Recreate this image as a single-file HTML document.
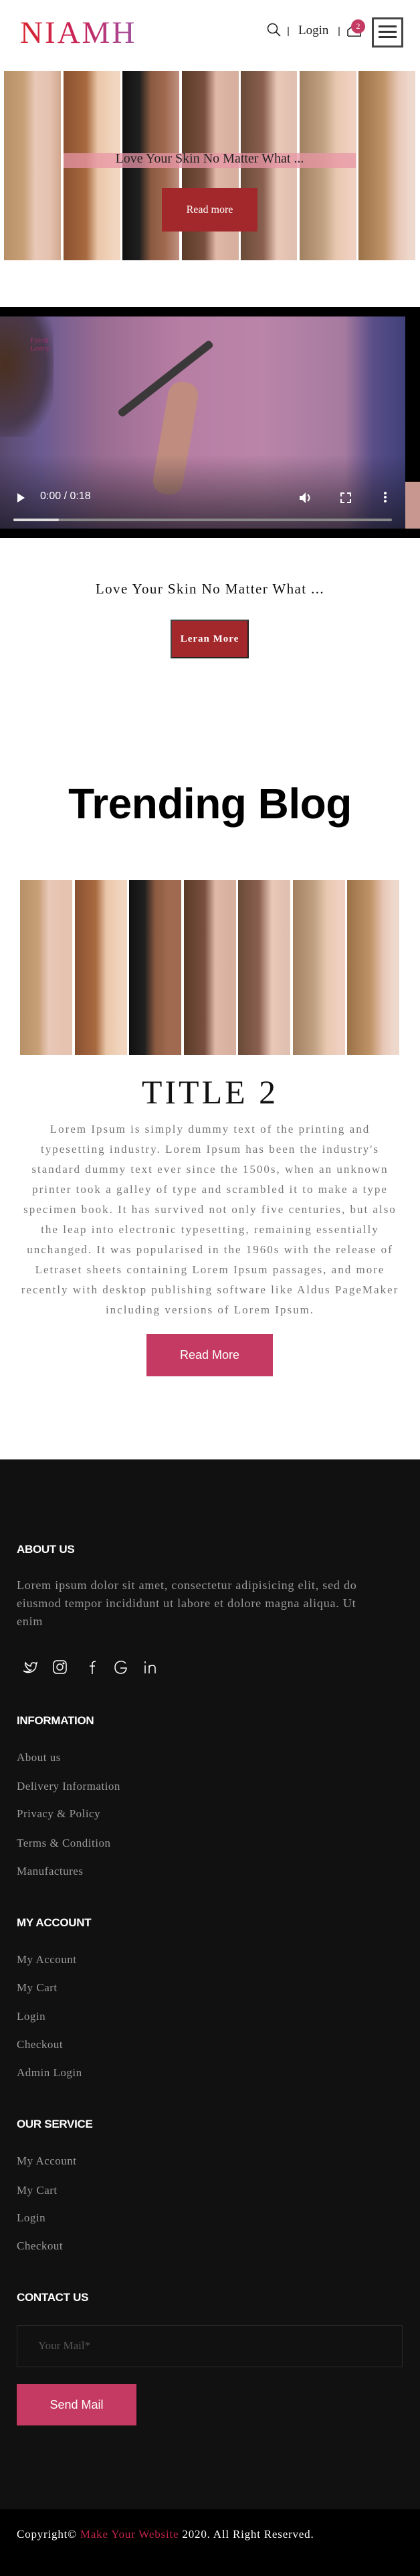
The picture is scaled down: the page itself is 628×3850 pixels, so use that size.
<!DOCTYPE html>
<html><head><meta charset="utf-8">
<style>
*{margin:0;padding:0;box-sizing:border-box}
html,body{width:628px;height:3850px;background:#fff;overflow:hidden}
body{position:relative;font-family:"Liberation Serif",serif}
.a{position:absolute}
.strips{display:flex;justify-content:space-between}
.strips div{height:100%}
.fh{position:absolute;left:25px;color:#fff;font-family:"Liberation Sans",sans-serif;font-weight:bold;font-size:17px;letter-spacing:-0.3px;line-height:20px}
.fl{position:absolute;left:25px;color:#9a9a9a;font-size:17px;line-height:20px;letter-spacing:0.5px}
</style></head><body>

<!-- header -->
<div class="a" style="left:30px;top:24px;font-size:47px;line-height:50px;letter-spacing:3px;background:linear-gradient(90deg,#d8262f,#c8245a 50%,#a050a0);-webkit-background-clip:text;background-clip:text;color:transparent">NIAMH</div>
<svg class="a" style="left:399px;top:34px" width="22" height="22" viewBox="0 0 22 22"><circle cx="8.5" cy="8.5" r="7" fill="none" stroke="#222" stroke-width="1.6"/><line x1="13.5" y1="13.5" x2="20" y2="20" stroke="#222" stroke-width="1.8"/></svg>
<div class="a" style="left:430px;top:40px;width:2px;height:14px;background:#777"></div>
<div class="a" style="left:446px;top:35px;font-size:19px;color:#222">Login</div>
<div class="a" style="left:506px;top:40px;width:2px;height:14px;background:#777"></div>
<svg class="a" style="left:518px;top:38px" width="24" height="18" viewBox="0 0 24 18"><path d="M2 16 L2 7 L8 2 M2 16 L21 16 L21 9" fill="none" stroke="#222" stroke-width="1.6"/></svg>
<div class="a" style="left:525px;top:29px;width:21px;height:21px;border-radius:50%;background:#c43a62;color:#fff;font-size:12px;text-align:center;line-height:21px">2</div>
<div class="a" style="left:556px;top:26px;width:47px;height:45px;border:3px solid #444"></div>
<div class="a" style="left:566px;top:38px;width:27px;height:3px;background:#333"></div>
<div class="a" style="left:566px;top:46px;width:27px;height:3px;background:#333"></div>
<div class="a" style="left:566px;top:54px;width:27px;height:3px;background:#333"></div>

<!-- hero -->
<div class="a strips" style="left:6px;top:106px;width:615px;height:283px">
<div style="width:85px;background:linear-gradient(90deg,#b89068 0,#c8a078 35%,#e8c8b8 55%,#e6c2b0 80%,#d0a890)"></div>
<div style="width:85px;background:linear-gradient(90deg,#8a5030 0,#a86a40 40%,#eac6a8 60%,#f2d6c0 90%)"></div>
<div style="width:85px;background:linear-gradient(90deg,#101010 0,#202020 30%,#8a5a40 50%,#a06a50 75%,#c09080)"></div>
<div style="width:85px;background:linear-gradient(90deg,#5a3a28 0,#7a5040 40%,#e0b8a8 60%,#d8b0a0 90%)"></div>
<div style="width:84px;background:linear-gradient(90deg,#6a4a38 0,#8a6050 40%,#eac8b8 65%,#e0c0b0 90%)"></div>
<div style="width:85px;background:linear-gradient(90deg,#a08060 0,#c0a080 40%,#e8c8b0 65%,#f0d0c0 90%)"></div>
<div style="width:85px;background:linear-gradient(90deg,#9a7048 0,#c09468 45%,#e8c8b8 70%,#eed8cc 90%)"></div>
</div>
<div class="a" style="left:95px;top:229px;width:437px;height:22px;background:rgba(232,150,165,.75)"></div>
<div class="a" style="left:95px;top:226px;width:437px;text-align:center;font-size:20px;color:#222">Love Your Skin No Matter What ...</div>
<div class="a" style="left:242px;top:281px;width:143px;height:65px;background:#a3282b;color:#fff;font-size:16px;text-align:center;line-height:65px">Read more</div>

<!-- video -->
<div class="a" style="left:0;top:459px;width:628px;height:345px;background:#000"></div>
<div class="a" style="left:0;top:473px;width:606px;height:317px;background:linear-gradient(90deg,#5a4a70 0,#6a5a90 10%,#9a6c92 25%,#b87ea4 45%,#b985a8 65%,#a67aa0 85%,#5a4e88 92%,#40407a 100%)"></div>
<div class="a" style="left:606px;top:720px;width:22px;height:70px;background:#c89890"></div>
<div class="a" style="left:0;top:473px;width:80px;height:180px;background:radial-gradient(ellipse at 10% 40%,#4a3020 0,#4a3a50 60%,transparent 80%)"></div>
<div class="a" style="left:160px;top:560px;width:175px;height:12px;background:#3a3838;transform:rotate(-38deg);border-radius:5px"></div>
<div class="a" style="left:240px;top:570px;width:45px;height:170px;background:#c08c80;border-radius:20px;transform:rotate(10deg)"></div>
<div class="a" style="left:0;top:680px;width:606px;height:110px;background:linear-gradient(180deg,transparent,rgba(20,20,30,.7))"></div>
<div class="a" style="left:45px;top:503px;font-size:11px;color:#a03070;font-style:italic">Fair&amp;<br>Lovely</div>
<svg class="a" style="left:24px;top:736px" width="14" height="16"><path d="M2 1 L13 8 L2 15 Z" fill="#fff"/></svg>
<div class="a" style="left:60px;top:733px;color:#fff;font-family:'Liberation Sans',sans-serif;font-size:16px">0:00 / 0:18</div>
<svg class="a" style="left:446px;top:734px" width="22" height="20"><path d="M2 7 H6 L11 2 V18 L6 13 H2 Z" fill="#fff"/><path d="M14 5 Q19 10 14 15" fill="none" stroke="#fff" stroke-width="2"/></svg>
<svg class="a" style="left:508px;top:735px" width="18" height="18"><path d="M2 7 V2 H7 M11 2 H16 V7 M16 11 V16 H11 M7 16 H2 V11" fill="none" stroke="#fff" stroke-width="2"/></svg>
<div class="a" style="left:574px;top:735px;width:4px;height:4px;background:#fff;border-radius:50%;box-shadow:0 6px #fff,0 12px #fff"></div>
<div class="a" style="left:20px;top:775px;width:566px;height:4px;background:#888;border-radius:2px"></div>
<div class="a" style="left:20px;top:775px;width:68px;height:4px;background:#ddd;border-radius:2px"></div>

<div class="a" style="left:0;top:868px;width:628px;text-align:center;font-size:21px;letter-spacing:1.4px;color:#111">Love Your Skin No Matter What ...</div>
<div class="a" style="left:255px;top:926px;width:117px;height:58px;background:#a3282b;border:2px solid #444;border-right-color:#222;border-bottom-color:#222;color:#fff;font-size:15px;letter-spacing:1px;text-align:center;line-height:54px;font-weight:bold">Leran More</div>

<div class="a" style="left:0;top:1164px;width:628px;text-align:center;font-family:'Liberation Sans',sans-serif;font-weight:bold;font-size:64px;letter-spacing:-0.5px;color:#000">Trending Blog</div>

<!-- blog -->
<div class="a strips" style="left:30px;top:1315px;width:567px;height:262px">
<div style="width:78px;background:linear-gradient(90deg,#b89068 0,#c8a078 35%,#e8c8b8 55%,#e6c2b0 80%)"></div>
<div style="width:78px;background:linear-gradient(90deg,#8a5030 0,#a86a40 40%,#eac6a8 60%,#f2d6c0 90%)"></div>
<div style="width:78px;background:linear-gradient(90deg,#101010 0,#202020 30%,#8a5a40 50%,#a06a50 75%)"></div>
<div style="width:78px;background:linear-gradient(90deg,#5a3a28 0,#7a5040 40%,#e0b8a8 60%,#d8b0a0 90%)"></div>
<div style="width:78px;background:linear-gradient(90deg,#6a4a38 0,#8a6050 40%,#eac8b8 65%,#e0c0b0 90%)"></div>
<div style="width:78px;background:linear-gradient(90deg,#a08060 0,#c0a080 40%,#e8c8b0 65%,#f0d0c0 90%)"></div>
<div style="width:78px;background:linear-gradient(90deg,#9a7048 0,#c09468 45%,#e8c8b8 70%,#eed8cc 90%)"></div>
</div>
<div class="a" style="left:0;top:1604px;width:628px;text-align:center;font-size:50px;line-height:56px;letter-spacing:4px;color:#111">TITLE 2</div>
<div class="a" style="left:26px;top:1673px;width:576px;text-align:center;font-size:17px;line-height:30px;letter-spacing:2px;color:#777">Lorem Ipsum is simply dummy text of the printing and typesetting industry. Lorem Ipsum has been the industry's standard dummy text ever since the 1500s, when an unknown printer took a galley of type and scrambled it to make a type specimen book. It has survived not only five centuries, but also the leap into electronic typesetting, remaining essentially unchanged. It was popularised in the 1960s with the release of Letraset sheets containing Lorem Ipsum passages, and more recently with desktop publishing software like Aldus PageMaker including versions of Lorem Ipsum.</div>
<div class="a" style="left:219px;top:1994px;width:189px;height:63px;background:#c43a62;color:#fff;font-family:'Liberation Sans',sans-serif;font-size:18px;text-align:center;line-height:63px">Read More</div>

<!-- footer -->
<div class="a" style="left:0;top:2181px;width:628px;height:1569px;background:#111;border-top:1px solid #555"></div>
<div class="fh" style="top:2306px">ABOUT US</div>
<div class="a" style="left:25px;top:2356px;width:545px;color:#9a9a9a;font-size:18px;line-height:27px;letter-spacing:0.8px">Lorem ipsum dolor sit amet, consectetur adipisicing elit, sed do eiusmod tempor incididunt ut labore et dolore magna aliqua. Ut enim</div>
<svg class="a" style="left:33px;top:2480px" width="205" height="24" viewBox="0 0 205 24" fill="none" stroke="#fff" stroke-width="1.5">
<path d="M2 17 Q8 20 13 16 Q9 16 8 13 Q6 12 6 10 Q4 9 5 5 Q9 10 13 10 Q13 5 17 5 Q19 5 20 6 L22 5 L21 8 Q21 16 13 19 Q7 21 2 17Z"/>
<rect x="47" y="2" width="19" height="19" rx="5"/><circle cx="56.5" cy="11.5" r="4.5"/><circle cx="62" cy="6" r="0.8" fill="#fff"/>
<path d="M105 22 V10 H101 M105 10 H109 M105 10 V7 Q105 3 110 3"/>
<path d="M155 6 Q151 2 146 3 Q139 5 139 12 Q139 20 147 21 Q155 21 156 13 H147"/>
<path d="M184 9 V21 M184 3 V6 M190 21 V9 M190 13 Q190 9 195 9 Q199 9 199 13 V21"/>
</svg>
<div class="fh" style="top:2562px">INFORMATION</div>
<div class="fl" style="top:2617px">About us</div>
<div class="fl" style="top:2660px">Delivery Information</div>
<div class="fl" style="top:2701px">Privacy &amp; Policy</div>
<div class="fl" style="top:2745px">Terms &amp; Condition</div>
<div class="fl" style="top:2787px">Manufactures</div>
<div class="fh" style="top:2864px">MY ACCOUNT</div>
<div class="fl" style="top:2919px">My Account</div>
<div class="fl" style="top:2961px">My Cart</div>
<div class="fl" style="top:3004px">Login</div>
<div class="fl" style="top:3046px">Checkout</div>
<div class="fl" style="top:3088px">Admin Login</div>
<div class="fh" style="top:3165px">OUR SERVICE</div>
<div class="fl" style="top:3220px">My Account</div>
<div class="fl" style="top:3264px">My Cart</div>
<div class="fl" style="top:3305px">Login</div>
<div class="fl" style="top:3347px">Checkout</div>
<div class="fh" style="top:3424px">CONTACT US</div>
<div class="a" style="left:25px;top:3475px;width:577px;height:63px;border:1px solid #2a2a2a;background:#111"></div>
<div class="a" style="left:57px;top:3496px;color:#555;font-size:17px">Your Mail*</div>
<div class="a" style="left:25px;top:3563px;width:179px;height:62px;background:#c43a62;color:#fff;font-family:'Liberation Sans',sans-serif;font-size:18px;text-align:center;line-height:62px">Send Mail</div>
<div class="a" style="left:0;top:3750px;width:628px;height:100px;background:#000"></div>
<div class="a" style="left:25px;top:3778px;color:#fff;font-size:17px;letter-spacing:0.8px">Copyright© <span style="color:#c02448">Make Your Website</span> 2020. All Right Reserved.</div>
</body></html>
